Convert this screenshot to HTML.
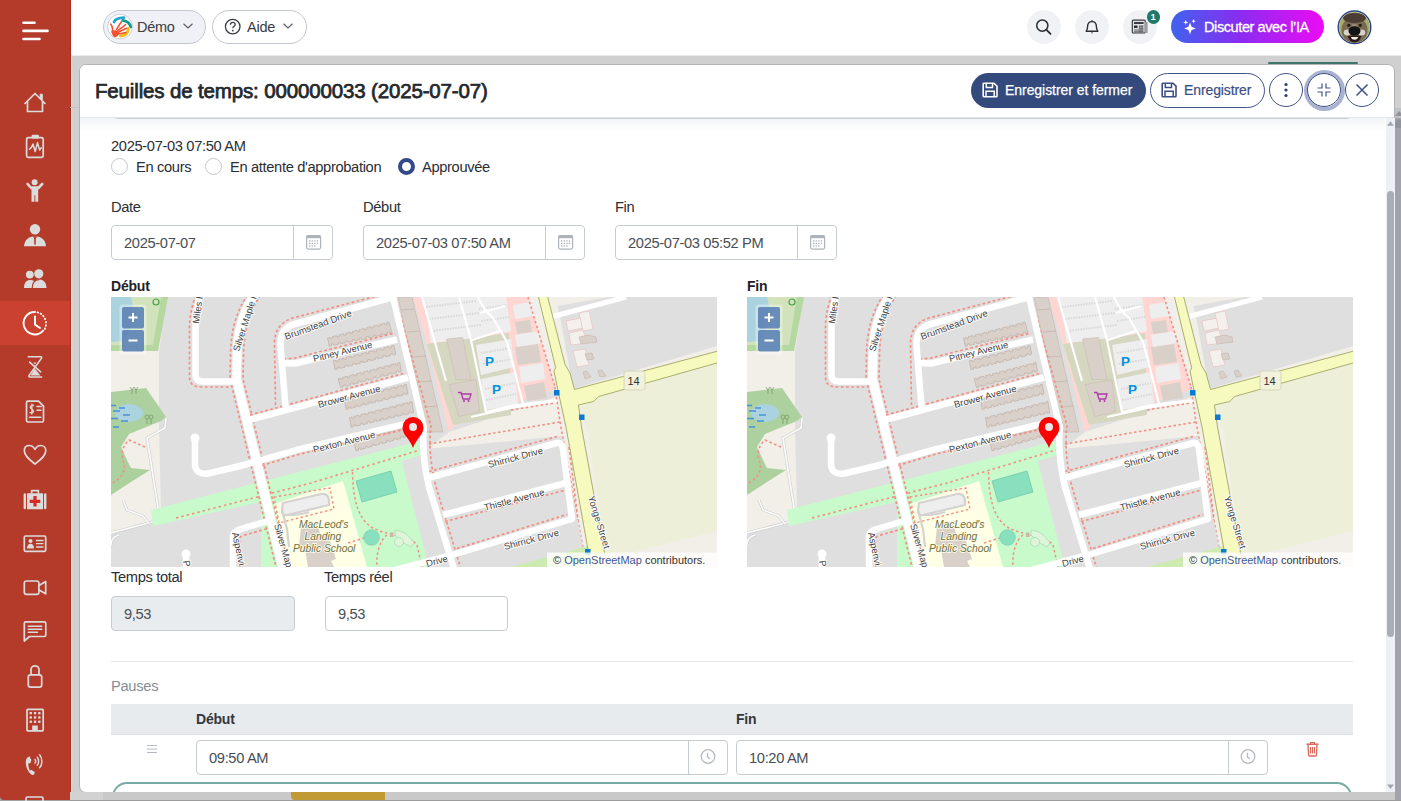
<!DOCTYPE html>
<html><head><meta charset="utf-8">
<style>
*{box-sizing:border-box;margin:0;padding:0}
html,body{width:1401px;height:801px;overflow:hidden;background:#a2a2a2;font-family:"Liberation Sans",sans-serif;color:#212529}
.a{position:absolute}
.t{position:absolute;white-space:nowrap;line-height:1}
#sidebar{position:absolute;left:0;top:0;width:71px;height:800px;background:#b43a2a;border-right:1px solid #b02d1c;border-bottom-left-radius:4px}
#topbar{position:absolute;left:71px;top:0;width:1331px;height:56px;background:#fff;border-bottom:1px solid #e8eaee}
#backdrop{position:absolute;left:72px;top:56px;width:1329px;height:745px;background:#d0d0d0}
#modal{position:absolute;left:79px;top:64px;width:1316px;height:729px;background:#fff;border-radius:7px;border:1px solid #b4b4b4}
.pill{position:absolute;top:10px;height:34px;border:1px solid #c3c8d0;border-radius:17px}
.circ{position:absolute;top:10px;width:34px;height:34px;border-radius:50%;background:#f1f2f5}
.lbl{font-size:14.7px;color:#2b2e33;letter-spacing:-0.35px}
.inp{position:absolute;height:35px;border:1px solid #c7ccd3;border-radius:4px;background:#fff}
.inp .v{position:absolute;left:12px;top:10px;font-size:14.7px;letter-spacing:-0.35px;color:#494e55;line-height:1;white-space:nowrap}
.inp .b{position:absolute;right:0;top:0;width:39px;height:33px;border-left:1px solid #c7ccd3}
.cb{position:absolute;top:73px;width:34px;height:34px;border-radius:50%;border:1px solid #40548a;background:#fff}
.radio{position:absolute;top:158px;width:17px;height:17px;border-radius:50%;border:1px solid #c3c8cf;background:#fff}
.ic{position:absolute;left:0;width:70px;height:44px}
</style></head><body>
<div id="sidebar"></div>
<div class="a" style="left:0;top:301px;width:70px;height:44px;background:#cb412f"></div>
<div class="a" style="left:71px;top:0;width:1px;height:801px;background:#dfe6ea"></div>
<svg class="a" style="left:0;top:0" width="70" height="801" viewBox="0 0 70 801" fill="none" stroke="#dcdcdc" stroke-width="1.7" stroke-linecap="round" stroke-linejoin="round">
 <!-- hamburger -->
 <g stroke="#fff" stroke-width="2.6">
  <line x1="23.5" y1="22.7" x2="34.5" y2="22.7"/>
  <line x1="23.5" y1="30.9" x2="47.5" y2="30.9"/>
  <line x1="23.5" y1="39" x2="39.5" y2="39"/>
 </g>
 <!-- house -->
 <path d="M25 103.5 L35 93.5 L45 103.5 M27.5 101 V111.5 H42.5 V101 M40.5 98.5 V94.5 H42 V100"/>
 <!-- clipboard -->
 <rect x="26.6" y="137.6" width="16.6" height="19.8" rx="1.6"/>
 <rect x="31.6" y="134.8" width="7.4" height="3.6" rx="1.2" fill="#dcdcdc" stroke="none"/>
 <path d="M29.4 149.3 L31.2 147.6 L33 144 L35.2 151.5 L37.5 142.6 L39.6 150 L41.2 147.8" stroke-width="1.5"/>
 <!-- child -->
 <g fill="#dcdcdc" stroke="none">
  <circle cx="34.6" cy="182.3" r="3"/>
  <path d="M31.5 186.2 H38.2 V195.2 H38.2 V201.8 H35.3 V195.2 H34.4 V201.8 H31.5 Z"/>
 </g>
 <path d="M31.2 188 L27.6 184 M38.4 188 L42.2 184" stroke-width="2.6"/>
 <!-- person w tie -->
 <g fill="#dcdcdc" stroke="none">
  <circle cx="35" cy="229.2" r="5.2"/>
  <path d="M24 246.2 C24.5 240 28.5 236.2 35 236.2 C41.5 236.2 45.5 240 46 246.2 Z"/>
 </g>
 <path d="M35 236.5 L35 244" stroke="#b43a2a" stroke-width="1.6"/>
 <path d="M33.3 236.6 L35 239 L36.7 236.6" stroke="#b43a2a" stroke-width="1"/>
 <!-- two persons -->
 <g fill="#dcdcdc" stroke="none">
  <circle cx="29.8" cy="274.6" r="3.9"/>
  <circle cx="38.8" cy="273.8" r="4.6"/>
  <path d="M24 288 C24 282.5 26.5 280 30.5 280 C33 280 34.5 281 35.5 282.5 L33.5 288 Z"/>
  <path d="M32.2 288 C32.5 282 35 279.6 39 279.6 C43 279.6 46.2 282 46.5 288 Z"/>
 </g>
 <path d="M32.2 288 C32.5 282 35 279.6 39 279.6" stroke="#b43a2a" stroke-width="1.2"/>
 <!-- clock active -->
 <g stroke="#fff" stroke-width="1.9">
  <path d="M35 312 A11.2 11.2 0 1 0 43.2 330.6"/>
  <path d="M35 316.5 V324.6 L40 328"/>
  <path d="M37.5 312.3 L38.2 312.5 M40.6 313.6 L41.2 314 M43.1 315.8 L43.5 316.3 M44.9 318.6 L45.1 319.2 M45.9 321.8 L45.95 322.4 M45.9 325.2 L45.8 325.8 M45 328.3 L44.8 328.9" stroke-width="1.8"/>
 </g>
 <!-- hourglass -->
 <path d="M28.3 356.8 H40.6 Q42.2 356.8 41.4 358.4 L29.2 375.2 Q28.3 377 30.2 377 H41.6" stroke-width="1.6"/>
 <path d="M29.6 362.2 L40.6 371.8" stroke-width="1.6"/>
 <path d="M34.8 368.4 L30.6 375.6 H40.4 L38.8 373.5 Z" fill="#dcdcdc" stroke="none"/>
 <path d="M33.4 362.6 H36.4 L34.9 364.6 Z" fill="#dcdcdc" stroke="none"/>
 <!-- invoice doc -->
 <path d="M27.5 401.2 H38.5 L43.5 406.2 V420.5 A1.5 1.5 0 0 1 42 422 H28 A1.5 1.5 0 0 1 26.5 420.5 V402.7 A1.5 1.5 0 0 1 28 401.2 Z"/>
 <path d="M37 406.5 H41 M37 410.3 H41 M29.5 417.2 H40.8" stroke-width="1.5"/>
 <path d="M33.5 405.5 C31.5 405.2 30.2 406 30.3 407.3 C30.5 409.2 33.5 409.3 33.5 411.2 C33.5 412.5 32 413 30 412.6 M31.9 404.2 V414" stroke-width="1.3"/>
 <!-- heart -->
 <path d="M35 464 C30 460 24.3 456.2 24.3 450.6 C24.3 447.3 26.6 445.5 29.4 445.5 C32 445.5 33.8 447.2 35 449.3 C36.2 447.2 38 445.5 40.6 445.5 C43.4 445.5 45.8 447.3 45.8 450.6 C45.8 456.2 40 460 35 464 Z"/>
 <!-- first aid -->
 <g fill="#dcdcdc" stroke="none">
  <path d="M30.8 489.8 H39.2 V493.5 H37.5 V491.6 H32.5 V493.5 H30.8 Z"/>
  <rect x="27" y="493.3" width="16" height="16" rx="0.5"/>
  <rect x="23.6" y="493.3" width="2.4" height="16" rx="1.2"/>
  <rect x="44" y="493.3" width="2.4" height="16" rx="1.2"/>
 </g>
 <path d="M33.4 496 H36.6 V499.7 H40.3 V502.9 H36.6 V506.6 H33.4 V502.9 H29.7 V499.7 H33.4 Z" fill="#d42a2a" stroke="none"/>
 <!-- id card -->
 <rect x="24.3" y="536" width="21.4" height="15.3" rx="1.2"/>
 <g fill="#dcdcdc" stroke="none">
  <circle cx="30.5" cy="541" r="2"/>
  <path d="M27 548.5 C27 545.5 28.5 543.8 30.5 543.8 C32.5 543.8 34 545.5 34 548.5 Z"/>
 </g>
 <path d="M36.5 540.5 H43 M36.5 543.7 H43 M36.5 547 H43" stroke-width="1.3"/>
 <!-- video -->
 <rect x="24.3" y="581" width="14.6" height="13.4" rx="2.2"/>
 <path d="M39 585.5 L45.7 581.6 V593.8 L39 589.9"/>
 <!-- chat -->
 <path d="M25.8 621.8 H44.3 A1.5 1.5 0 0 1 45.8 623.3 V635 A1.5 1.5 0 0 1 44.3 636.5 H29.5 L24.3 641 V623.3 A1.5 1.5 0 0 1 25.8 621.8 Z"/>
 <path d="M28.3 626.2 H41.8 M28.3 629.2 H41.8 M28.3 632.3 H37.5" stroke-width="1.4"/>
 <!-- lock -->
 <path d="M31 674.5 V669.8 A4 4 0 0 1 39 669.8 V674.5"/>
 <rect x="28.3" y="674.8" width="13.4" height="12.4" rx="2.2"/>
 <!-- building -->
 <rect x="27" y="709.4" width="16.2" height="21.4" rx="0.8"/>
 <g fill="#dcdcdc" stroke="none">
  <rect x="29.6" y="712" width="2.3" height="2.3"/><rect x="33.9" y="712" width="2.3" height="2.3"/><rect x="38.2" y="712" width="2.3" height="2.3"/>
  <rect x="29.6" y="716.3" width="2.3" height="2.3"/><rect x="33.9" y="716.3" width="2.3" height="2.3"/><rect x="38.2" y="716.3" width="2.3" height="2.3"/>
  <rect x="29.6" y="720.6" width="2.3" height="2.3"/><rect x="33.9" y="720.6" width="2.3" height="2.3"/><rect x="38.2" y="720.6" width="2.3" height="2.3"/>
  <rect x="32.2" y="725.5" width="5.6" height="5"/>
 </g>
 <!-- phone -->
 <path d="M29.8 756.5 C26.5 757 25.6 760 25.8 763.5 C26 767.5 28 772 31.2 774.5 C32 775.2 33.4 775 34 774.4 L34.6 773.2 C34.9 772.5 34.6 771.8 34 771.5 L31.8 770.3 C31 769.8 30 770.3 29.8 770.6 C28.8 768.5 28.2 765.8 28.3 763.3 C28.9 763.6 30 763.6 30.5 762.8 L31.2 760.5 C31.4 759.8 31.2 759 30.5 758.8 Z" fill="#dcdcdc" stroke="none"/>
 <path d="M35 759.5 C35.8 760.5 35.8 762 35 763 M37.3 757.2 C39 759.3 39 763.3 37.3 765.3 M39.6 754.8 C42.6 758 42.6 764.6 39.6 767.8" stroke-width="1.5"/>
 <!-- partial -->
 <path d="M26 801 V798.5 A1.5 1.5 0 0 1 27.5 797 H41.5 A1.5 1.5 0 0 1 43 798.5 V801"/>
</svg>
<div id="topbar"></div>
<!-- Demo pill -->
<div class="pill" style="left:103px;width:103px;background:#eff1f6"></div>
<svg class="a" style="left:106px;top:13px" width="27" height="27" viewBox="0 0 27 27">
 <circle cx="14" cy="13.6" r="12.4" fill="#fff" stroke="#bfc4cc" stroke-width="0.8"/>
 <path d="M8 9 Q9.5 4.8 18 4.6" stroke="#1fa6d0" stroke-width="2.8" fill="none" stroke-linecap="round"/>
 <path d="M16.8 7.4 Q23.5 8.5 24.8 14" stroke="#139a8e" stroke-width="2.8" fill="none" stroke-linecap="round"/>
 <path d="M22.2 15.5 Q22.5 22 14.5 23" stroke="#f5b915" stroke-width="2.8" fill="none" stroke-linecap="round"/>
 <g stroke="#f4502f" stroke-width="1.5" fill="none" stroke-linecap="round">
  <path d="M10.5 16.5 L15.4 8.6"/><path d="M11.8 17.6 L19.6 11.6"/><path d="M12.3 19.2 L20.4 15.3"/><path d="M12.6 21 L19.8 19.6"/>
  <path d="M4.8 11 C6.6 13.5 6.8 16.5 6.2 19.5"/>
 </g>
 <path d="M5.5 18 C7.5 17 10.5 16.5 13 19.5 C13.5 21.5 11.5 23.5 9.5 24.2 C7.5 24.5 6 22.5 5.5 18 Z" fill="#f4502f"/>
</svg>
<div class="t" style="left:137px;top:20px;font-size:14.5px;color:#3a3d44;letter-spacing:-0.3px">Démo</div>
<svg class="a" style="left:182px;top:22px" width="12" height="8" viewBox="0 0 12 8"><path d="M1.5 1.8 L6 6 L10.5 1.8" stroke="#5a5e66" stroke-width="1.2" fill="none"/></svg>
<!-- Aide pill -->
<div class="pill" style="left:212px;width:95px;background:#fff"></div>
<svg class="a" style="left:224px;top:18px" width="18" height="18" viewBox="0 0 18 18">
 <circle cx="8.7" cy="8.6" r="7.3" stroke="#3a3d44" stroke-width="1.3" fill="none"/>
 <path d="M6.4 6.8 C6.4 5.2 7.5 4.3 8.8 4.3 C10.2 4.3 11.2 5.2 11.2 6.4 C11.2 8.1 8.8 8.3 8.8 10.2" stroke="#3a3d44" stroke-width="1.3" fill="none"/>
 <circle cx="8.8" cy="12.6" r="0.9" fill="#3a3d44"/>
</svg>
<div class="t" style="left:247px;top:20px;font-size:14.5px;color:#3a3d44;letter-spacing:-0.2px">Aide</div>
<svg class="a" style="left:282px;top:22px" width="12" height="8" viewBox="0 0 12 8"><path d="M1.5 1.8 L6 6 L10.5 1.8" stroke="#5a5e66" stroke-width="1.2" fill="none"/></svg>
<!-- right circles -->
<div class="circ" style="left:1027px"></div>
<svg class="a" style="left:1034px;top:17px" width="20" height="20" viewBox="0 0 20 20">
 <circle cx="8.3" cy="8.6" r="5.6" stroke="#2b2e33" stroke-width="1.5" fill="none"/>
 <path d="M12.3 12.6 L16.5 16.8" stroke="#2b2e33" stroke-width="1.9" stroke-linecap="round"/>
</svg>
<div class="circ" style="left:1075px"></div>
<svg class="a" style="left:1082px;top:17px" width="20" height="20" viewBox="0 0 20 20">
 <path d="M4.2 14.2 C5.3 13 5.6 11.8 5.6 9.6 C5.6 6.6 7.4 4.6 10 4.6 C12.6 4.6 14.4 6.6 14.4 9.6 C14.4 11.8 14.7 13 15.8 14.2 Z" stroke="#2b2e33" stroke-width="1.4" fill="none" stroke-linejoin="round"/>
 <path d="M9.9 3.3 V4.6" stroke="#2b2e33" stroke-width="1.4"/>
 <path d="M8.8 15.6 A1.3 1.3 0 0 0 11.2 15.6 Z" fill="#2b2e33"/>
</svg>
<div class="circ" style="left:1123px"></div>
<svg class="a" style="left:1131px;top:19px" width="18" height="16" viewBox="0 0 18 16">
 <rect x="1.3" y="1.2" width="13" height="12.8" rx="1" fill="#e2e3e6" stroke="#3a3d42" stroke-width="1.2"/>
 <rect x="14" y="3" width="2.6" height="11" fill="#9a9ca2"/>
 <rect x="3" y="3" width="9.6" height="2" fill="#3a3d42"/>
 <rect x="3" y="6.5" width="3.5" height="2.5" fill="#2b2e33"/>
 <path d="M7.8 7.2 H12.6 M7.8 9.2 H12.6 M3 11 H12.6 M3 12.8 H12.6" stroke="#4a4c52" stroke-width="0.9"/>
 <path d="M9 6.3 V13.5 M11 6.3 V13.5" stroke="#4a4c52" stroke-width="0.7"/>
</svg>
<div class="a" style="left:1146.5px;top:10px;width:13.5px;height:13.5px;border-radius:50%;background:#1d7a68"></div>
<div class="t" style="left:1150.5px;top:12px;font-size:9.5px;font-weight:bold;color:#fff">1</div>
<!-- AI button -->
<div class="a" style="left:1171px;top:10px;width:153px;height:33px;border-radius:17px;background:linear-gradient(90deg,#3f63ee 0%,#8a2cf0 45%,#ec0bf4 100%)"></div>
<svg class="a" style="left:1180px;top:17px" width="18" height="20" viewBox="0 0 18 20">
 <path d="M10 5.5 L11.6 9.8 L15.8 11.4 L11.6 13 L10 17.3 L8.4 13 L4.2 11.4 L8.4 9.8 Z" fill="#fff"/>
 <path d="M5.8 2.8 L6.5 4.7 L8.4 5.4 L6.5 6.1 L5.8 8 L5.1 6.1 L3.2 5.4 L5.1 4.7 Z" fill="#fff"/>
 <path d="M13.6 2 L14.2 3.6 L15.8 4.2 L14.2 4.8 L13.6 6.4 L13 4.8 L11.4 4.2 L13 3.6 Z" fill="#fff"/>
</svg>
<div class="t" style="left:1204px;top:20px;font-size:14.5px;color:#fff;letter-spacing:-0.4px;-webkit-text-stroke:0.3px #fff">Discuter avec l’IA</div>
<!-- avatar -->
<svg class="a" style="left:1337px;top:9.5px" width="35" height="35" viewBox="0 0 35 35">
 <defs><clipPath id="avc"><circle cx="17.5" cy="17.3" r="15.4"/></clipPath></defs>
 <circle cx="17.5" cy="17.3" r="16.3" fill="#fff" stroke="#2c4282" stroke-width="1.4"/>
 <g clip-path="url(#avc)">
  <rect x="0" y="0" width="35" height="35" fill="#a3ad68"/>
  <rect x="0" y="26" width="35" height="10" fill="#a89470"/>
  <ellipse cx="17.5" cy="20" rx="13" ry="13" fill="#7b6a52"/>
  <ellipse cx="17.5" cy="8" rx="11.5" ry="5" fill="#4b3c34"/>
  <circle cx="11.8" cy="15.3" r="1.6" fill="#1e1e1e"/><circle cx="23.2" cy="15.3" r="1.6" fill="#1e1e1e"/>
  <ellipse cx="17.5" cy="16" rx="3" ry="2" fill="#9d8c70"/>
  <ellipse cx="10.5" cy="22.5" rx="3.8" ry="3" fill="#d6d2cc"/><ellipse cx="24.5" cy="22.5" rx="3.8" ry="3" fill="#d6d2cc"/>
  <ellipse cx="17.5" cy="21" rx="6" ry="4.8" fill="#141414"/>
  <path d="M10.5 26 Q17.5 25 24.5 26 Q22 33 17.5 32.5 Q13 33 10.5 26 Z" fill="#2b1c18"/>
  <path d="M14 27 H21 Q20.5 29.8 17.5 29.8 Q14.5 29.8 14 27 Z" fill="#f0f0ea"/>
 </g>
</svg>
<div id="backdrop"></div>
<div class="a" style="left:70px;top:107px;width:9px;height:1px;background:#c4c4c4"></div>
<div class="a" style="left:1268px;top:62px;width:90px;height:2px;background:#3f7468;border-radius:1px"></div>
<div id="modal"></div>
<!-- header -->
<div class="a" style="left:80px;top:118px;width:1305px;height:14px;background:linear-gradient(#f3f4f6,#fff)"></div>
<div class="a" style="left:112px;top:100px;width:1241px;height:19px;border:1px solid #c9ced5;border-top:none;border-radius:0 0 6px 6px"></div>
<div class="a" style="left:80px;top:65px;width:1305px;height:52px;background:#fff;border-radius:6px 6px 0 0"></div>
<div class="a" style="left:80px;top:117px;width:1314px;height:1px;background:#e3e5e9"></div>
<div class="t" style="left:95px;top:81px;font-size:20.5px;color:#25282d;letter-spacing:-0.15px;-webkit-text-stroke:0.75px #25282d">Feuilles de temps: 000000033 (2025-07-07)</div>
<div class="a" style="left:971px;top:73px;width:175px;height:35px;border-radius:18px;background:#354a7c"></div>
<svg class="a" style="left:982px;top:82px" width="17" height="16" viewBox="0 0 17 16">
 <path d="M2 1.2 H12 L15 4.2 V14 A0.8 0.8 0 0 1 14.2 14.8 H2 A0.8 0.8 0 0 1 1.2 14 V2 A0.8 0.8 0 0 1 2 1.2 Z" stroke="#fff" stroke-width="1.6" fill="none"/>
 <path d="M4.3 1.5 V5.5 H10.5 V1.5 M4 14.5 V9.3 H12.2 V14.5" stroke="#fff" stroke-width="1.5" fill="none"/>
</svg>
<div class="t" style="left:1005px;top:83px;font-size:14px;color:#fff;letter-spacing:-0.05px;-webkit-text-stroke:0.25px #fff">Enregistrer et fermer</div>
<div class="a" style="left:1150px;top:73px;width:115px;height:35px;border-radius:18px;border:1px solid #40548a;background:#fff"></div>
<svg class="a" style="left:1161px;top:82px" width="17" height="16" viewBox="0 0 17 16">
 <path d="M2 1.2 H12 L15 4.2 V14 A0.8 0.8 0 0 1 14.2 14.8 H2 A0.8 0.8 0 0 1 1.2 14 V2 A0.8 0.8 0 0 1 2 1.2 Z" stroke="#3a4e84" stroke-width="1.6" fill="none"/>
 <path d="M4.3 1.5 V5.5 H10.5 V1.5 M4 14.5 V9.3 H12.2 V14.5" stroke="#3a4e84" stroke-width="1.5" fill="none"/>
</svg>
<div class="t" style="left:1184px;top:83px;font-size:14px;color:#3a4e84;letter-spacing:-0.1px;-webkit-text-stroke:0.2px #3a4e84">Enregistrer</div>
<div class="cb" style="left:1269px"></div>
<svg class="a" style="left:1269px;top:73px" width="34" height="34" viewBox="0 0 34 34"><g fill="#2e3f70"><circle cx="17" cy="11.5" r="1.6"/><circle cx="17" cy="17" r="1.6"/><circle cx="17" cy="22.5" r="1.6"/></g></svg>
<div class="a" style="left:1303.5px;top:69.5px;width:41px;height:41px;border-radius:50%;border:4px solid #a9b3d0"></div>
<div class="cb" style="left:1307px;border-color:#3f5288"></div>
<svg class="a" style="left:1307px;top:73px" width="34" height="34" viewBox="0 0 34 34"><path d="M15 10.5 V15 H10.5 M19 10.5 V15 H23.5 M15 23.5 V19 H10.5 M19 23.5 V19 H23.5" stroke="#3f5288" stroke-width="1.2" fill="none"/></svg>
<div class="cb" style="left:1345px"></div>
<svg class="a" style="left:1345px;top:73px" width="34" height="34" viewBox="0 0 34 34"><path d="M11.5 11.5 L22.5 22.5 M22.5 11.5 L11.5 22.5" stroke="#3f5288" stroke-width="1.5" fill="none"/></svg>

<!-- inner scrollbar -->
<div class="a" style="left:1386px;top:118px;width:9px;height:674px;background:#eef0f5"></div>
<svg class="a" style="left:1386px;top:118px" width="9" height="674" viewBox="0 0 9 674">
 <path d="M1 7.8 L4.5 3.2 L8 7.8 Z" fill="#a0a6b0"/>
 <path d="M1 666.5 L4.5 671 L8 666.5 Z" fill="#a0a6b0"/>
 <rect x="1" y="73" width="7" height="446" rx="3.5" fill="#a9aeb6"/>
</svg>
<!-- outer scrollbar -->
<div class="a" style="left:1395px;top:108px;width:6px;height:693px;background:#a0a4aa"></div>
<div class="a" style="left:1395px;top:108px;width:6px;height:10px;background:#bfc2c7"></div>
<svg class="a" style="left:1395px;top:108px" width="6" height="20" viewBox="0 0 6 20"><path d="M0 8 L4 3 L6 5 V8 Z" fill="#8f939a"/><path d="M0 14 Q3 10 6 12 V20 H0 Z" fill="#8f939a"/></svg>
<!-- form -->
<div class="t lbl" style="left:111px;top:139px">2025-07-03 07:50 AM</div>
<div class="radio" style="left:111px"></div>
<div class="t lbl" style="left:136px;top:160px">En cours</div>
<div class="radio" style="left:205px"></div>
<div class="t lbl" style="left:230px;top:160px">En attente d'approbation</div>
<div class="a" style="left:397.5px;top:158px;width:17px;height:17px;border-radius:50%;border:4.5px solid #34498a;background:#fff"></div>
<div class="t lbl" style="left:422px;top:160px">Approuvée</div>

<div class="t lbl" style="left:111px;top:200px">Date</div>
<div class="t lbl" style="left:363px;top:200px">Début</div>
<div class="t lbl" style="left:615px;top:200px">Fin</div>

<div class="inp" style="left:111px;top:225px;width:222px"><div class="v">2025-07-07</div><div class="b"></div></div>
<div class="inp" style="left:363px;top:225px;width:222px"><div class="v">2025-07-03 07:50 AM</div><div class="b"></div></div>
<div class="inp" style="left:615px;top:225px;width:222px"><div class="v">2025-07-03 05:52 PM</div><div class="b"></div></div>
<svg class="a" style="left:0;top:0" width="900" height="300" viewBox="0 0 900 300">
 <defs><g id="cal">
  <rect x="0.6" y="0.6" width="14" height="13.5" rx="1.5" fill="none" stroke="#aeb3ba" stroke-width="1.2"/>
  <rect x="0.6" y="0.6" width="14" height="2.6" fill="#aeb3ba"/>
  <g fill="#aeb3ba"><rect x="3" y="5.3" width="1.4" height="1.3"/><rect x="5.6" y="5.3" width="1.4" height="1.3"/><rect x="8.2" y="5.3" width="1.4" height="1.3"/><rect x="10.8" y="5.3" width="1.4" height="1.3"/>
  <rect x="3" y="7.8" width="1.4" height="1.3"/><rect x="5.6" y="7.8" width="1.4" height="1.3"/><rect x="8.2" y="7.8" width="1.4" height="1.3"/><rect x="10.8" y="7.8" width="1.4" height="1.3"/>
  <rect x="3" y="10.3" width="1.4" height="1.3"/><rect x="5.6" y="10.3" width="1.4" height="1.3"/><rect x="8.2" y="10.3" width="1.4" height="1.3"/></g>
 </g></defs>
 <use href="#cal" x="306" y="235"/>
 <use href="#cal" x="558" y="235"/>
 <use href="#cal" x="810" y="235"/>
</svg>

<div class="t" style="left:111px;top:279px;font-size:14px;font-weight:bold;color:#1f2226;letter-spacing:-0.2px">Début</div>
<div class="t" style="left:747px;top:279px;font-size:14px;font-weight:bold;color:#1f2226;letter-spacing:-0.2px">Fin</div>

<div class="t lbl" style="left:111px;top:570px">Temps total</div>
<div class="t lbl" style="left:324px;top:570px">Temps réel</div>
<div class="inp" style="left:111px;top:596px;width:184px;background:#e9ecef"><div class="v">9,53</div></div>
<div class="inp" style="left:325px;top:596px;width:183px"><div class="v">9,53</div></div>

<div class="a" style="left:111px;top:661px;width:1242px;height:1px;background:#e6e8eb"></div>
<div class="t" style="left:111px;top:679px;font-size:14.7px;letter-spacing:-0.3px;color:#878d95">Pauses</div>

<div class="a" style="left:111px;top:704px;width:1242px;height:31px;background:#e8ebee;border-bottom:1px solid #dde1e5"></div>
<div class="t" style="left:196px;top:712px;font-size:14px;font-weight:bold;color:#33373d;letter-spacing:-0.2px">Début</div>
<div class="t" style="left:736px;top:712px;font-size:14px;font-weight:bold;color:#33373d;letter-spacing:-0.2px">Fin</div>
<svg class="a" style="left:146px;top:744px" width="12" height="11" viewBox="0 0 12 11"><path d="M1 1.5 H11 M1 5 H11 M1 8.5 H11" stroke="#b5bac1" stroke-width="1.2"/></svg>
<div class="inp" style="left:196px;top:740px;width:532px"><div class="v">09:50 AM</div><div class="b"></div></div>
<div class="inp" style="left:736px;top:740px;width:532px"><div class="v">10:20 AM</div><div class="b"></div></div>
<svg class="a" style="left:700px;top:748px" width="16" height="17" viewBox="0 0 16 17"><circle cx="8" cy="8.5" r="6.8" fill="none" stroke="#b4b9c0" stroke-width="1.3"/><path d="M7.5 4.8 V9 L10 11" fill="none" stroke="#b4b9c0" stroke-width="1.3"/></svg>
<svg class="a" style="left:1240px;top:748px" width="16" height="17" viewBox="0 0 16 17"><circle cx="8" cy="8.5" r="6.8" fill="none" stroke="#b4b9c0" stroke-width="1.3"/><path d="M7.5 4.8 V9 L10 11" fill="none" stroke="#b4b9c0" stroke-width="1.3"/></svg>
<svg class="a" style="left:1305px;top:741px" width="15" height="16" viewBox="0 0 15 16">
 <path d="M1.5 3.2 H13.5" stroke="#d9675c" stroke-width="1.5"/>
 <path d="M5.5 3 V1.5 H9.5 V3" stroke="#d9675c" stroke-width="1.2" fill="none"/>
 <path d="M3 3.5 L3.6 14 A1 1 0 0 0 4.6 15 H10.4 A1 1 0 0 0 11.4 14 L12 3.5" stroke="#d9675c" stroke-width="1.3" fill="none"/>
 <path d="M5.6 6 V12.5 M7.5 6 V12.5 M9.4 6 V12.5" stroke="#d9675c" stroke-width="1.1"/>
</svg>
<div class="a" style="left:112px;top:782px;width:1240px;height:30px;border:2px solid #78aaa5;border-radius:16px"></div>
<div class="a" style="left:79px;top:792px;width:1316px;height:9px;background:transparent"></div>
<svg class="a" style="left:111px;top:297px" width="1242" height="270" viewBox="0 0 1242 270">
<defs>
 <clipPath id="mclip"><rect x="0" y="0" width="606" height="270"/></clipPath>
 <g id="map" clip-path="url(#mclip)" font-family="Liberation Sans" >
  <rect x="0" y="0" width="606" height="270" fill="#e0dfdf"/>
  <!-- beige corridor along Yonge & right side -->
  <path d="M405 0 H606 V270 H470 L452 140 L316 152 L338 135 L445 100 Z" fill="#f2efe9"/>
  <!-- left beige -->
  <path d="M0 0 H56 L48 54 L48 133 L50 211 L49 223 L0 236 Z" fill="#f2efe9"/>
  <!-- top-left grass -->
  <path d="M0 0 H57 L47 54 H0 Z" fill="#b5d7a0"/>
  <path d="M0 0 H50 L42 48 H0 Z" fill="#d2e3bb"/>
  <path d="M0 0 H20 C24 12 22 32 12 44 L0 45 Z" fill="#aad3df"/>
  <circle cx="45" cy="5" r="3" fill="none" stroke="#4aa04a" stroke-width="1.2"/>
  <!-- lower-left forest -->
  <path d="M0 95 L35 91 L55 120 L50 124 L18 137 L10 150 L16 163 L20 171 L39 173 L20 185 L0 198 Z" fill="#add19e"/>
  <ellipse cx="18" cy="116" rx="14" ry="9" fill="#aad3df"/>
  <path d="M0 108.5 H5 M8 111 H14 M2 114 H9 M12 118 H19 M0 121.5 H7 M10 124 H17 M2 130 H8" stroke="#4a90d9" stroke-width="1.3"/>
  <g stroke="#7a9a6a" stroke-width="0.8" fill="none"><path d="M21 92 V97 M19 90 L21 93 L23 90 M25 92 V97 M23 90 L25 93 L27 90 M36 122 V127 M40 122 V127"/><circle cx="36" cy="120" r="2"/><circle cx="40" cy="120" r="2"/></g>
  <path d="M34 150 L18 143 C12 148 10 155 12 163 C14 170 16 178 0 187" stroke="#f28f82" stroke-width="1.6" fill="none" stroke-dasharray="2.5 2.5"/>
  <!-- footway along beige boundary -->
  <g fill="none" stroke-linejoin="round">
   <path d="M55 121 L54 131 L36 141 L49 223 L0 236" stroke="#cfcfcf" stroke-width="3"/>
   <path d="M55 121 L54 131 L36 141 L49 223 L0 236" stroke="#fbfbfb" stroke-width="1.7"/>
   <path d="M12 203 L16 213 L32 219 L38 227" stroke="#cfcfcf" stroke-width="2.8"/>
   <path d="M12 203 L16 213 L32 219 L38 227" stroke="#fbfbfb" stroke-width="1.5"/>
   <path d="M0 248 Q0 240 8 238" stroke="#cfcfcf" stroke-width="3"/>
   <path d="M0 248 Q0 240 8 238" stroke="#fbfbfb" stroke-width="1.7"/>
  </g>

  <!-- park band + park -->
  <path d="M40 213 L309 144 L311 158 L291 164 L318 270 L150 270 L150 205 L42 229 Z" fill="#c8facc"/>
  <path d="M291 164 L311 159 L340 270 L318 270 Z" fill="#e0dfdf"/>
  <!-- school -->
  <path d="M163 207 L232 184 L256 270 L175 270 Z" fill="#ffffe5"/>
  <path d="M65 221 L200 186 L309 153" stroke="#f28f82" stroke-width="1.6" fill="none" stroke-dasharray="2.5 3"/>
  <!-- pitch -->
  <path d="M245 184 L280 174 L286 195 L251 205 Z" fill="#88e0be" stroke="#74c9a8" stroke-width="0.8"/>
  <circle cx="260.5" cy="240.5" r="7.8" fill="#88e0be" stroke="#74c9a8" stroke-width="0.6"/>
  <path d="M241.5 175 C242 200 246 222 262 231 C275 238 300 239 306 248 L311 270" stroke="#f28f82" stroke-width="1.5" fill="none" stroke-dasharray="2.5 2.5"/>
  <path d="M276 238 C268 244 265 258 266 270" stroke="#f28f82" stroke-width="1.5" fill="none" stroke-dasharray="2.5 2.5"/>
  <path d="M237 246 L253 241" stroke="#f28f82" stroke-width="1.5" fill="none" stroke-dasharray="2.5 2.5"/>
  <path d="M284 233 Q296 234 303 246 L300 250 Q290 246 284 238 Z" fill="#dff5da" stroke="#a7dcb0" stroke-width="0.8"/>
  <circle cx="288" cy="245" r="4.5" fill="#dff5da" stroke="#a7dcb0" stroke-width="0.8"/>
  <rect x="279" y="235.5" width="3.5" height="4.5" fill="#c8b8a8"/>
  <!-- school buildings -->
  <path d="M163 200 L219 191 L223 212 L168 226 Z" fill="none" stroke="#f28f82" stroke-width="1.4" stroke-dasharray="2.5 2.5"/>
  <path d="M172 206 L210 197 Q217 196 218 203 L218 208 L176 218 Q171 219 171 213 Z" fill="#eeeeee" stroke="#d3d3d3" stroke-width="2.2"/><path d="M171 213 L176 232 L178 250 M176 218 Q190 218 198 215" stroke="#d3d3d3" stroke-width="2.2" fill="none"/>
  <path d="M190 229 L206 225 L210 240 L217 238 L225 262 L220 264 L223 270 L197 270 L194 252 L188 250 Z" fill="#d9d0c9"/>

  <!-- commercial -->
  <path d="M302 0 H417 L445 92 L398 108 L345 128 L338 135 L332 120 L316 47 L311 0 Z" fill="#ffd6d1"/>
  <path d="M316 47 L398 36 L400 118 L342 128 Z" fill="#d5d7c1"/>
  <path d="M311 0 L316 47 L338 135 L331 135 L301 0 Z" fill="#e0dfdf"/>
  <path d="M302 0 H311 L321 45 L316 47 Z" fill="#ffd6d1"/>
  <path d="M312 0 H366 L372 40 L320 46 Z" fill="#eeeeee"/>
  <path d="M365 0 H395 L400 34 L370 40 Z" fill="#eeeeee"/>
  <path d="M365 48 L400 42 L403 70 L370 78 Z M370 82 L404 75 L407 108 L374 113 Z" fill="#eeeeee"/>
  <path d="M315 10 L365 4 M318 22 L368 16 M320 34 L370 28 M370 56 L400 51 M372 67 L402 62 M374 92 L404 86 M375 103 L405 97 M368 12 L395 8 M370 24 L398 20" stroke="#d8d8d8" stroke-width="2" stroke-dasharray="1.5 1.2"/>
  <path d="M335.6 42 L351.6 40.4 L360 82.6 L344.9 82.6 Z" fill="#d9d0c9" stroke="#c8bcb0" stroke-width="0.6"/>
  <path d="M338 87.6 L365 82.6 L368.5 114.6 L348 119.6 Z" fill="#d9d0c9" stroke="#c8bcb0" stroke-width="0.6"/>
  <g fill="none" stroke="#ac39ac" stroke-width="1.3"><path d="M347 95.5 H350 L352 102 H358.5 L360 97 H351"/></g>
  <circle cx="353" cy="104" r="1" fill="#ac39ac"/><circle cx="357.5" cy="104" r="1" fill="#ac39ac"/>
  <path d="M404 25 L419 23 L421 35 L406 37 Z M404 50 L427 47 L430 65 L407 68 Z M413 89 L433 85 L436 101 L416 104 Z" fill="#d9d0c9"/>
  <path d="M402 8 L425 4 L428 18 L404 22 Z M404 38 L428 34 L430 46 L406 50 Z M408 70 L432 66 L434 82 L410 86 Z" fill="#eeeeee"/>
  <text x="374" y="69" font-size="13.5" fill="#0092da" font-weight="bold">P</text>
  <text x="381" y="97" font-size="13.5" fill="#0092da" font-weight="bold">P</text>
  <!-- service roads -->
  <path d="M311 0 L335 84 M348 0 L360 43 L375 115 L404 108 M361 43 L389 34 M369 16 L394 9 M367 0 Q372 12 382 21 L396 45 L403 71 L412 107 M360 120 L400 111 L440 105" stroke="#fff" stroke-width="2.2" fill="none"/>
  <path d="M400 110 Q420 106 446 104" stroke="#fff" stroke-width="3.5" fill="none"/>
  <!-- townhouse strip along spine -->
  <path d="M287 0 H301 L332 135 H316 Z" fill="#d9d0c9" stroke="#c4b6ab" stroke-width="0.6"/>
  <path d="M290 13 L303 12 M296 35 L309 34 M302 60 L315 59 M308 85 L321 84 M314 110 L327 109" stroke="#c4b6ab" stroke-width="0.8"/>
  <!-- corridor dashes -->
  <path d="M318 147 L449 125" stroke="#f28f82" stroke-width="1.6" fill="none" stroke-dasharray="2.5 2.5"/>
  <path d="M444 90 L449 125 L474 262" stroke="#f28f82" stroke-width="1.6" fill="none" stroke-dasharray="2.5 2.5"/>
  <path d="M417 0 L444 90" stroke="#f28f82" stroke-width="1.6" fill="none" stroke-dasharray="2.5 2.5"/>
  <path d="M400 113 L444 106" stroke="#f28f82" stroke-width="1.6" fill="none" stroke-dasharray="2.5 2.5"/>
  <!-- Shirrick block (gray) -->
  <path d="M317 152 L451 139 L474 262 L343 270 Z" fill="#e0dfdf"/>

  <!-- row houses -->
  <g fill="#d9d0c9" stroke="#c2b4a9" stroke-width="0.8">
   <path d="M216.6 41.0 L219.0 40.4 L219.3 41.9 L221.3 41.4 L221.0 39.8 L223.4 39.2 L225.8 38.6 L226.1 40.2 L228.2 39.6 L227.9 38.1 L230.2 37.4 L232.6 36.8 L232.9 38.4 L235.0 37.9 L234.7 36.3 L237.1 35.7 L239.5 35.0 L239.8 36.6 L241.8 36.1 L241.5 34.5 L243.9 33.9 L246.3 33.3 L246.6 34.8 L248.6 34.3 L248.3 32.7 L250.7 32.1 L253.1 31.5 L253.4 33.1 L255.5 32.5 L255.1 31.0 L257.5 30.3 L259.9 29.7 L260.2 31.3 L262.3 30.7 L262.0 29.2 L264.4 28.6 L266.7 27.9 L267.0 29.5 L269.1 29.0 L268.8 27.4 L271.2 26.8 L273.6 26.2 L273.9 27.7 L275.9 27.2 L275.6 25.6 L278.0 25.0 L281.0 36.0 L278.6 36.5 L278.3 34.9 L276.2 35.4 L276.5 37.0 L274.0 37.5 L271.6 38.0 L271.3 36.4 L269.2 36.8 L269.5 38.4 L267.0 38.9 L264.6 39.4 L264.3 37.9 L262.2 38.3 L262.5 39.9 L260.1 40.4 L257.6 40.9 L257.3 39.3 L255.2 39.8 L255.5 41.4 L253.1 41.9 L250.6 42.4 L250.3 40.8 L248.2 41.2 L248.6 42.8 L246.1 43.3 L243.7 43.8 L243.4 42.3 L241.3 42.7 L241.6 44.3 L239.1 44.8 L236.7 45.3 L236.4 43.7 L234.3 44.2 L234.6 45.8 L232.2 46.3 L229.7 46.8 L229.4 45.2 L227.3 45.6 L227.6 47.2 L225.2 47.7 L222.7 48.2 L222.4 46.7 L220.3 47.1 L220.6 48.7 L218.2 49.2 Z"/>
   <path d="M222.3 63.8 L225.0 63.1 L225.2 64.7 L227.5 64.1 L227.2 62.5 L229.9 61.9 L232.5 61.2 L232.8 62.8 L235.1 62.2 L234.8 60.6 L237.5 59.9 L240.1 59.3 L240.4 60.9 L242.7 60.3 L242.4 58.7 L245.1 58.0 L247.7 57.4 L248.0 58.9 L250.3 58.3 L250.0 56.8 L252.7 56.1 L255.3 55.4 L255.6 57.0 L257.9 56.4 L257.6 54.8 L260.2 54.2 L262.9 53.5 L263.2 55.1 L265.5 54.5 L265.2 52.9 L267.8 52.2 L270.5 51.6 L270.8 53.2 L273.0 52.6 L272.8 51.0 L275.4 50.3 L278.1 49.7 L278.4 51.2 L280.6 50.6 L280.3 49.1 L283.0 48.4 L284.7 57.3 L282.0 58.0 L281.8 56.4 L279.5 57.0 L279.8 58.6 L277.1 59.2 L274.4 59.9 L274.2 58.3 L271.9 58.9 L272.2 60.5 L269.5 61.1 L266.8 61.8 L266.6 60.2 L264.3 60.8 L264.6 62.4 L261.9 63.1 L259.2 63.7 L259.0 62.2 L256.7 62.8 L257.0 64.3 L254.3 65.0 L251.6 65.7 L251.4 64.1 L249.1 64.7 L249.4 66.3 L246.7 66.9 L244.0 67.6 L243.8 66.0 L241.5 66.6 L241.8 68.2 L239.1 68.8 L236.4 69.5 L236.2 67.9 L233.9 68.5 L234.2 70.1 L231.5 70.8 L228.8 71.4 L228.6 69.9 L226.3 70.5 L226.6 72.0 L223.9 72.7 Z"/>
   <path d="M227.1 81.7 L229.5 81.1 L229.9 82.6 L232.0 82.1 L231.6 80.5 L234.0 79.9 L236.4 79.3 L236.8 80.8 L238.8 80.3 L238.4 78.7 L240.8 78.1 L243.2 77.4 L243.6 79.0 L245.7 78.4 L245.3 76.9 L247.7 76.3 L250.1 75.6 L250.5 77.2 L252.6 76.6 L252.1 75.1 L254.5 74.5 L256.9 73.8 L257.4 75.4 L259.4 74.8 L259.0 73.3 L261.4 72.6 L263.8 72.0 L264.2 73.6 L266.3 73.0 L265.8 71.5 L268.2 70.8 L270.6 70.2 L271.1 71.7 L273.1 71.2 L272.7 69.7 L275.1 69.0 L277.5 68.4 L277.9 69.9 L280.0 69.4 L279.5 67.8 L281.9 67.2 L284.3 66.6 L284.8 68.1 L286.8 67.6 L286.4 66.0 L288.8 65.4 L290.4 74.4 L287.7 75.1 L287.3 73.6 L285.0 74.2 L285.5 75.7 L282.8 76.4 L280.1 77.1 L279.7 75.6 L277.4 76.2 L277.9 77.7 L275.2 78.5 L272.5 79.2 L272.1 77.6 L269.8 78.2 L270.3 79.8 L267.6 80.5 L264.9 81.2 L264.5 79.6 L262.2 80.3 L262.7 81.8 L260.0 82.5 L257.3 83.2 L256.9 81.7 L254.6 82.3 L255.1 83.8 L252.4 84.5 L249.7 85.2 L249.3 83.7 L247.0 84.3 L247.5 85.8 L244.8 86.5 L242.1 87.3 L241.7 85.7 L239.4 86.3 L239.9 87.9 L237.2 88.6 L234.5 89.3 L234.1 87.7 L231.8 88.4 L232.3 89.9 L229.6 90.6 Z"/>
   <path d="M233.6 101.9 L236.0 101.3 L236.2 102.9 L238.3 102.4 L238.1 100.8 L240.5 100.3 L242.9 99.7 L243.1 101.3 L245.2 100.8 L244.9 99.2 L247.3 98.7 L249.7 98.1 L249.9 99.7 L252.0 99.2 L251.8 97.6 L254.2 97.0 L256.6 96.5 L256.8 98.0 L258.9 97.6 L258.6 96.0 L261.0 95.4 L263.4 94.8 L263.7 96.4 L265.7 95.9 L265.5 94.4 L267.9 93.8 L270.3 93.2 L270.5 94.8 L272.6 94.3 L272.3 92.7 L274.7 92.2 L277.1 91.6 L277.4 93.2 L279.4 92.7 L279.2 91.1 L281.6 90.5 L284.0 90.0 L284.2 91.6 L286.3 91.1 L286.0 89.5 L288.4 88.9 L290.8 88.4 L291.1 89.9 L293.1 89.4 L292.9 87.9 L295.3 87.3 L296.9 97.0 L294.5 97.6 L294.3 96.0 L292.2 96.5 L292.4 98.1 L290.0 98.7 L287.6 99.3 L287.4 97.7 L285.3 98.3 L285.6 99.8 L283.2 100.4 L280.8 101.0 L280.6 99.5 L278.5 100.0 L278.7 101.6 L276.3 102.2 L273.9 102.8 L273.7 101.2 L271.6 101.7 L271.9 103.3 L269.5 103.9 L267.1 104.5 L266.8 102.9 L264.8 103.4 L265.0 105.0 L262.6 105.6 L260.2 106.2 L260.0 104.6 L257.9 105.1 L258.2 106.7 L255.8 107.3 L253.4 107.9 L253.1 106.4 L251.1 106.9 L251.3 108.5 L248.9 109.1 L246.5 109.7 L246.3 108.1 L244.2 108.6 L244.5 110.2 L242.1 110.8 L239.7 111.4 L239.4 109.8 L237.4 110.3 L237.6 111.9 L235.2 112.5 Z"/>
   <path d="M238.5 120.6 L240.9 120.0 L241.2 121.5 L243.3 121.0 L243.0 119.4 L245.4 118.8 L247.9 118.2 L248.1 119.7 L250.2 119.2 L249.9 117.6 L252.4 117.0 L254.8 116.4 L255.1 117.9 L257.1 117.4 L256.9 115.8 L259.3 115.2 L261.7 114.6 L262.0 116.1 L264.1 115.6 L263.8 114.0 L266.2 113.4 L268.7 112.8 L268.9 114.3 L271.0 113.8 L270.7 112.2 L273.2 111.6 L275.6 111.0 L275.9 112.5 L277.9 112.0 L277.7 110.4 L280.1 109.8 L282.5 109.2 L282.8 110.7 L284.9 110.2 L284.6 108.6 L287.0 108.0 L289.5 107.4 L289.7 108.9 L291.8 108.4 L291.5 106.8 L294.0 106.2 L296.4 105.6 L296.7 107.1 L298.7 106.6 L298.5 105.0 L300.9 104.4 L302.6 115.7 L300.2 116.3 L299.9 114.7 L297.8 115.2 L298.1 116.8 L295.7 117.3 L293.2 117.9 L293.0 116.3 L290.9 116.8 L291.1 118.4 L288.7 118.9 L286.3 119.5 L286.0 117.9 L283.9 118.4 L284.2 120.0 L281.8 120.6 L279.3 121.1 L279.1 119.6 L277.0 120.0 L277.3 121.6 L274.8 122.2 L272.4 122.8 L272.1 121.2 L270.0 121.7 L270.3 123.2 L267.9 123.8 L265.4 124.4 L265.2 122.8 L263.1 123.3 L263.4 124.9 L260.9 125.4 L258.5 126.0 L258.2 124.4 L256.2 124.9 L256.4 126.5 L254.0 127.1 L251.6 127.6 L251.3 126.0 L249.2 126.5 L249.5 128.1 L247.0 128.7 L244.6 129.2 L244.4 127.7 L242.3 128.2 L242.5 129.7 L240.1 130.3 Z"/>
   <path d="M242.5 143.3 L245.0 142.7 L245.4 144.2 L247.5 143.7 L247.2 142.1 L249.7 141.4 L252.2 140.8 L252.6 142.4 L254.7 141.8 L254.4 140.2 L256.9 139.6 L259.4 138.9 L259.8 140.5 L261.9 139.9 L261.5 138.4 L264.1 137.7 L266.6 137.1 L266.9 138.6 L269.1 138.1 L268.7 136.5 L271.2 135.9 L273.8 135.2 L274.1 136.8 L276.3 136.2 L275.9 134.7 L278.4 134.0 L280.9 133.4 L281.3 134.9 L283.5 134.4 L283.1 132.8 L285.6 132.2 L288.1 131.5 L288.5 133.1 L290.7 132.5 L290.3 131.0 L292.8 130.3 L294.5 140.0 L292.0 140.7 L291.7 139.1 L289.5 139.7 L289.9 141.3 L287.4 142.0 L285.0 142.7 L284.6 141.1 L282.5 141.7 L282.8 143.3 L280.4 144.0 L277.9 144.7 L277.5 143.1 L275.4 143.7 L275.8 145.3 L273.3 146.0 L270.8 146.7 L270.4 145.1 L268.3 145.7 L268.7 147.2 L266.2 147.9 L263.7 148.6 L263.4 147.1 L261.3 147.7 L261.6 149.2 L259.1 149.9 L256.7 150.6 L256.3 149.1 L254.2 149.7 L254.5 151.2 L252.1 151.9 L249.6 152.6 L249.2 151.1 L247.1 151.6 L247.5 153.2 L245.0 153.9 Z"/>
  </g>
  <!-- right gray block, field -->
  <path d="M446.5 9 L497 0 H606 V49 L462 92 L449.5 22 Z" fill="#e0dfdf"/>
  <path d="M440 20 L515 0" stroke="#fff" stroke-width="5" fill="none"/>
  <path d="M467 106 L606 65 V234 L494 262 L477 135 Z" fill="#eeefd8"/>
  <path d="M400 270 L480 248 L486 270 Z" fill="#cdebb0"/>
  <!-- small buildings in gray block -->
  <g fill="#f4f0ee" stroke="#e8c8c4" stroke-width="0.8">
   <path d="M455 24 L470 21 L472 31 L457 34 Z"/><path d="M458 36 L472 33 L476 46 L460 48 Z"/>
   <path d="M462 54 L474 52 L478 68 L466 70 Z"/><path d="M468 16 L478 14 L482 32 L472 34 Z"/>
  </g>
  <g fill="#d9d0c9" stroke="#c4b6ab" stroke-width="0.6">
   <path d="M468 40 L478 38 L485 40 L486 45 L470 47 Z"/><path d="M474 57 L481 56 L483 62 L476 63 Z"/>
   <path d="M472 75 L476 74 L480 80 L474 82 Z"/><path d="M487 74 L491 73 L495 79 L489 80 Z"/>
  </g>

  <!-- Yonge street + route 14 -->
  <path d="M427 -2 L444.7 70.8 L443 74 L447.2 94.4 L455 130 L480.5 272 H496.5 L470.5 130 L467.4 108 Q476 106 482.6 104.5 L487.7 99.5 L607 65.7 V54 L463.5 92.5 L459 76 L454 67.4 L436.2 -2 Z" fill="#f7fabf" stroke="#a9ae6c" stroke-width="1"/>
  <rect x="513" y="74" width="21" height="19" rx="2.5" fill="#f1f1dc" stroke="#d0d0b0" stroke-width="0.8"/>
  <text x="516.5" y="88" font-size="11" fill="#333">14</text>
  <rect x="443" y="93" width="5.5" height="5.5" fill="#0a7bd0"/>
  <rect x="468" y="117.5" width="5.5" height="5.5" fill="#0a7bd0"/>
  <rect x="474" y="252" width="5.5" height="5.5" fill="#0a7bd0"/>

  <!-- sidewalks (dashed) -->
  <g fill="none" stroke="#f28f82" stroke-width="1.7" stroke-dasharray="2.8 2.4">
   <path d="M85 -2 Q78.5 15 78.5 30 V80 Q78.5 90 90 90 H119"/>
   <path d="M164.5 108 L163.5 48 Q163 27 182 21 L277 -4"/>
   <path d="M172.5 62 L184 61 L284 36"/>
   <path d="M139 118 L294 76"/>
   <path d="M151 168.5 L189 157 L310 128.5"/>
   <path d="M318 174.5 L446 139.5"/>
   <path d="M458 150 L467 223"/>
   <path d="M346 251.5 L456 217.5"/>
   <path d="M334 224.5 L457 192.5"/>
   <path d="M283.5 -2 L320 129 Q316.5 155 325 190 L350 272"/>
   <path d="M128.5 272 V242 Q128.5 239.5 132 238.5 L162 230"/>
   <path d="M136.5 -2 C125 15 119.5 35 119.5 60 L119 82 L165.5 272"/>
   <path d="M149.5 -2 C138.5 15 132.5 35 132.5 60 L132 82 L178.5 272"/>
  </g>
  <!-- roads -->
  <g fill="none" stroke="#ffffff" stroke-width="6.5" stroke-linejoin="round">
   <path d="M89 -2 Q84.5 15 84.5 30 V78 Q84.5 84.5 92 84.5 H124"/>
   <path d="M174.5 110 L169.5 48 Q169 31 184 27 L279 1"/>
   <path d="M171 66 L184 66.5 L286 42.5"/>
   <path d="M136 123.5 L297 80.5"/>
   <path d="M84 142 V168 Q85 178 97 176.5 L129 169 L189 152.2 L313 122.5"/>
   <path d="M317 181 L446 146 Q451 145 452 152 L461 222 L341 258 L250 282"/>
   <path d="M332 218 L455 186"/>
   <path d="M122 272 V240 Q122 234 130 232 L160 223"/>
   <path d="M75 257 V272"/>
   <path d="M281.5 -2 L313 131 Q310 155 318 190 L343 272"/>
  </g>
  <path d="M143 -2 C132 15 126 35 126 60 L125.5 82 L172 272" stroke="#fff" stroke-width="9" fill="none"/>
  <circle cx="84" cy="141" r="4.5" fill="#fff"/>
  <circle cx="75" cy="257" r="4.5" fill="#fff"/>

  <!-- labels -->
  <g font-size="9.5" fill="#404040" stroke="#fff" stroke-width="1.8" paint-order="stroke" stroke-linejoin="round">
   <text transform="translate(88,27) rotate(-82)">Miles R</text>
   <text transform="translate(128,55) rotate(-72)">Silver Maple R</text>
   <text transform="translate(175,43) rotate(-20)">Brumstead Drive</text>
   <text transform="translate(203,65) rotate(-14)">Pitney Avenue</text>
   <text transform="translate(208,111) rotate(-15)">Brower Avenue</text>
   <text transform="translate(203,156) rotate(-14)">Pexton Avenue</text>
   <text transform="translate(378,171) rotate(-15)">Shirrick Drive</text>
   <text transform="translate(374,214) rotate(-15)">Thistle Avenue</text>
   <text transform="translate(394,253) rotate(-15)">Shirrick Drive</text>
   <text transform="translate(163,228) rotate(74)">Silver Map</text>
   <text transform="translate(121,236) rotate(78)">Aspenvi</text>
   <text transform="translate(72,264) rotate(80)">P</text>
   <text transform="translate(316,270) rotate(-15)">Drive</text>
   <text transform="translate(477,200) rotate(73)">Yonge Street</text>
  </g>
  <g font-size="10.3" font-style="italic" fill="#6e7040" stroke="#fffde8" stroke-width="1.6" paint-order="stroke">
   <text x="188" y="230.5">MacLeod's</text>
   <text x="193.5" y="242.5">Landing</text>
   <text x="182" y="254.5">Public School</text>
  </g>

  <!-- zoom control -->
  <rect x="8.5" y="7.5" width="27" height="50" rx="3" fill="rgba(255,255,255,0.35)"/>
  <rect x="11" y="10" width="22" height="21.5" rx="2" fill="#5b82b6" fill-opacity="0.9"/>
  <rect x="11" y="33" width="22" height="21.5" rx="2" fill="#5b82b6" fill-opacity="0.9"/>
  <path d="M22 16 V25 M17.5 20.5 H26.5 M17.5 43.5 H26.5" stroke="#fff" stroke-width="2"/>

  <!-- marker -->
  <path d="M302 151 C298.5 141 291.5 138 291.5 130.5 A10.5 10.5 0 0 1 312.5 130.5 C312.5 138 305.5 141 302 151 Z" fill="#f00"/>
  <circle cx="302" cy="130" r="4" fill="#e8e8e8"/>

  <!-- attribution -->
  <rect x="436" y="255.5" width="170" height="14.5" fill="rgba(255,255,255,0.8)"/>
  <text x="442" y="266.5" font-size="11" fill="#333">© <tspan fill="#3f5a96">OpenStreetMap</tspan> contributors.</text>
 </g>
</defs>
<use href="#map" x="0" y="0"/>
<use href="#map" x="636" y="0"/>
</svg>
<div class="a" style="left:70px;top:792px;width:1325px;height:9px;background:#c9c9c9"></div>
<div class="a" style="left:70px;top:792px;width:33px;height:9px;background:#d2d2d2"></div>
<div class="a" style="left:291px;top:792px;width:94px;height:8px;background:#c29a33;border-radius:0 0 0 4px"></div>
<div class="a" style="left:70px;top:800px;width:1331px;height:1px;background:#9c9c9c"></div>
</body></html>
